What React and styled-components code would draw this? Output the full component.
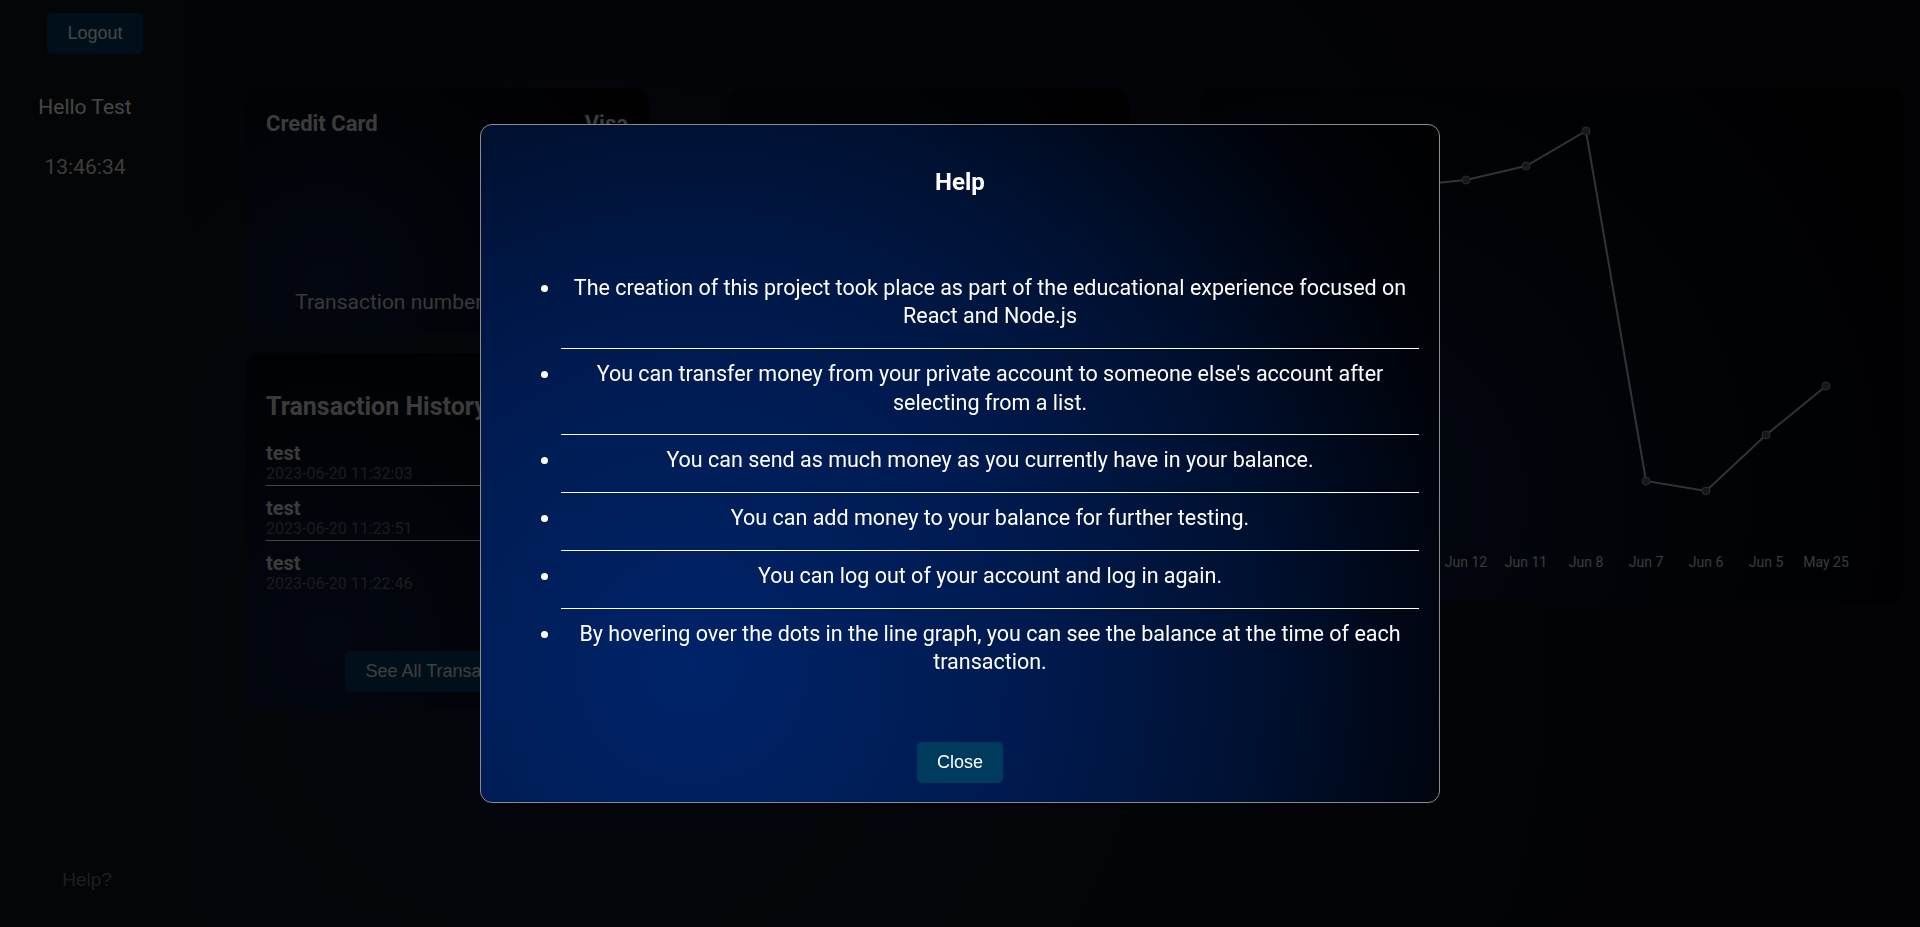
import React from 'react';
import styled, { createGlobalStyle } from 'styled-components';

const GlobalStyle = createGlobalStyle`
  * { box-sizing: border-box; }
  html, body { margin: 0; padding: 0; }
  body {
    background: #0d1018;
    font-family: Roboto, "Liberation Sans", sans-serif;
    color: #fff;
    overflow: hidden;
  }
`;

const Page = styled.div`
  display: flex;
  height: 927px;
  background: radial-gradient(circle at 30% 70%, #111a30 0%, #0c0f19 60%, #0b0d13 100%);
`;

const Sidebar = styled.aside`
  width: 190px;
  flex-shrink: 0;
  display: flex;
  flex-direction: column;
  align-items: center;
  padding: 13px 0 36px;
  background: linear-gradient(180deg, #121316 0%, #101319 100%);
`;

const Button = styled.button`
  border: none;
  border-radius: 5px;
  background: #003a5c;
  color: #fff;
  font-family: "Liberation Sans", Arial, sans-serif;
  font-size: 18px;
  line-height: 21px;
  padding: 10px 20px;
  cursor: pointer;
`;

const Greeting = styled.div`
  margin: 39px 20px 0 0;
  display: flex;
  flex-direction: column;
  align-items: center;
  gap: 32px;
  font-size: 21px;
  line-height: 28px;
`;

const Clock = styled.span`
  color: #dedede;
`;

const HelpLink = styled.a`
  margin: auto 16px 0 0;
  font-family: "Liberation Sans", Arial, sans-serif;
  font-size: 19px;
  line-height: 22px;
  color: #6f6f6f;
  cursor: pointer;
`;

const Main = styled.main`
  flex: 1;
  display: flex;
  align-items: flex-start;
  padding: 88px 16px 0 55px;
`;

const Column = styled.div`
  display: flex;
  flex-direction: column;
  gap: 20px;
  width: ${p => p.$w}px;
  margin-right: ${p => p.$mr || 0}px;
`;

const Card = styled.section`
  height: ${p => p.$h}px;
  border-radius: 16px;
  background: radial-gradient(circle at 20% 80%, #0c1b40 0%, #070c1a 50%, #040508 90%);
  padding: ${p => p.$pad || '22px 21px 17px'};
  display: flex;
  flex-direction: column;
  color: #d9d9d9;
`;

const CardHeader = styled.div`
  display: flex;
  justify-content: space-between;
  font-size: 22px;
  font-weight: 700;
  line-height: 28px;
`;

const CardNumber = styled.div`
  margin-top: auto;
  text-align: center;
  font-size: 21px;
  line-height: 28px;
  color: #cfcfcf;
`;

const HistoryTitle = styled.h3`
  margin: 0;
  font-size: 25px;
  line-height: 30px;
  font-weight: 700;
`;

const HistoryList = styled.div`
  margin-top: 9px;
`;

const HistoryItem = styled.div`
  padding: 11px 0 1px;
  border-bottom: 1px solid ${p => (p.$last ? 'transparent' : '#fff')};
`;

const ItemName = styled.div`
  font-size: 20px;
  font-weight: 700;
  line-height: 22px;
`;

const ItemDate = styled.div`
  font-size: 16px;
  line-height: 20px;
  color: #666;
`;

const SeeAll = styled(Button)`
  margin-top: auto;
  align-self: center;
  color: #e4e4e4;
`;

const ChartSvg = styled.svg`
  display: block;
  width: 100%;
  height: 100%;
`;

const Overlay = styled.div`
  position: fixed;
  inset: 0;
  background: rgba(0, 0, 0, 0.73);
  display: flex;
  align-items: center;
  justify-content: center;
`;

const Modal = styled.div`
  width: 960px;
  border: 1px solid #8c8c8c;
  border-radius: 12px;
  padding: 43px 20px 19px;
  background: radial-gradient(
    circle at 22% 80%,
    #002369 0%,
    #001a4e 38%,
    #001030 62%,
    #00030a 85%,
    #000 100%
  );
`;

const ModalTitle = styled.h2`
  margin: 0;
  text-align: center;
  font-size: 24px;
  line-height: 28px;
  font-weight: 700;
`;

const HelpList = styled.ul`
  margin: 67px 0 0;
  padding: 0 0 0 60px;
  list-style: disc;
`;

const HelpItem = styled.li`
  padding: 11px 0 17.5px;
  border-bottom: 1px solid #fff;
  text-align: center;
  font-size: 21.5px;
  line-height: 28.3px;

  &:last-child {
    border-bottom: none;
  }
`;

const ModalFooter = styled.div`
  margin-top: 48px;
  display: flex;
  justify-content: center;
`;

const transactions = [
  { name: 'test', date: '2023-06-20 11:32:03' },
  { name: 'test', date: '2023-06-20 11:23:51' },
  { name: 'test', date: '2023-06-20 11:22:46' },
];

const points = [
  { label: 'Jun 20', y: 112 },
  { label: 'Jun 19', y: 106 },
  { label: 'Jun 15', y: 101 },
  { label: 'Jun 13', y: 98 },
  { label: 'Jun 12', y: 92 },
  { label: 'Jun 11', y: 78 },
  { label: 'Jun 8', y: 43 },
  { label: 'Jun 7', y: 393 },
  { label: 'Jun 6', y: 403 },
  { label: 'Jun 5', y: 347 },
  { label: 'May 25', y: 298 },
];

const helpTexts = [
  'The creation of this project took place as part of the educational experience focused on React and Node.js',
  "You can transfer money from your private account to someone else's account after selecting from a list.",
  'You can send as much money as you currently have in your balance.',
  'You can add money to your balance for further testing.',
  'You can log out of your account and log in again.',
  'By hovering over the dots in the line graph, you can see the balance at the time of each transaction.',
];

function BalanceChart() {
  const xs = points.map((_, i) => 26 + i * 60);
  const path = points.map((p, i) => `${i ? 'L' : 'M'}${xs[i]} ${p.y}`).join(' ');
  return (
    <ChartSvg viewBox="0 0 704 516">
      <path d={path} fill="none" stroke="#bdbdbd" strokeWidth="2" />
      {points.map((p, i) => (
        <circle key={p.label} cx={xs[i]} cy={p.y} r="4" fill="#5a5a5a" stroke="#9a9a9a" strokeWidth="1" />
      ))}
      {points.map((p, i) => (
        <text key={p.label} x={xs[i]} y="479" textAnchor="middle" fontSize="14" fill="#d8d8d8" fontFamily="Roboto, sans-serif">
          {p.label}
        </text>
      ))}
    </ChartSvg>
  );
}

export default function App() {
  return (
    <>
      <GlobalStyle />
      <Page>
        <Sidebar>
          <Button>Logout</Button>
          <Greeting>
            <span>Hello Test</span>
            <Clock>13:46:34</Clock>
          </Greeting>
          <HelpLink>Help?</HelpLink>
        </Sidebar>
        <Main>
          <Column $w={404} $mr={78}>
            <Card $h={245}>
              <CardHeader>
                <span>Credit Card</span>
                <span>Visa</span>
              </CardHeader>
              <CardNumber>Transaction number: 542136789</CardNumber>
            </Card>
            <Card $h={357} $pad="39px 21px 18px">
              <HistoryTitle>Transaction History</HistoryTitle>
              <HistoryList>
                {transactions.map((t, i) => (
                  <HistoryItem key={t.date} $last={i === transactions.length - 1}>
                    <ItemName>{t.name}</ItemName>
                    <ItemDate>{t.date}</ItemDate>
                  </HistoryItem>
                ))}
              </HistoryList>
              <SeeAll>See All Transactions</SeeAll>
            </Card>
          </Column>
          <Column $w={402} $mr={71}>
            <Card $h={245} />
          </Column>
          <Column $w={704}>
            <Card $h={516} $pad="0">
              <BalanceChart />
            </Card>
          </Column>
        </Main>
      </Page>
      <Overlay>
        <Modal>
          <ModalTitle>Help</ModalTitle>
          <HelpList>
            {helpTexts.map(t => (
              <HelpItem key={t}>{t}</HelpItem>
            ))}
          </HelpList>
          <ModalFooter>
            <Button>Close</Button>
          </ModalFooter>
        </Modal>
      </Overlay>
    </>
  );
}
